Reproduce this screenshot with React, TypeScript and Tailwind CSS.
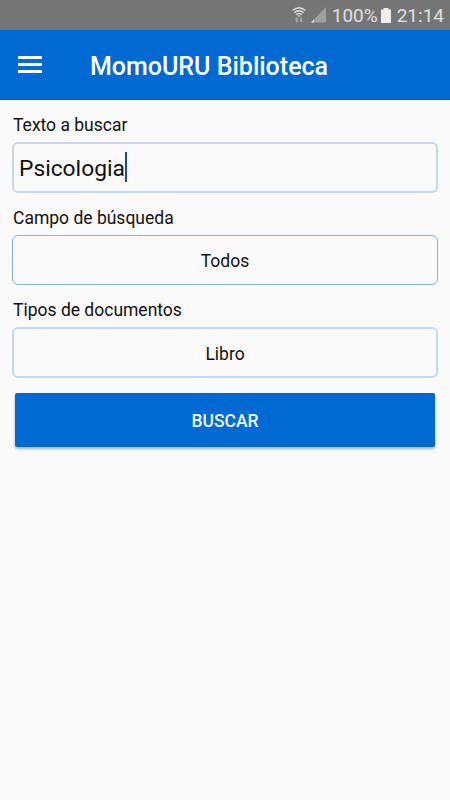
import React from 'react';

const StatusBar: React.FC = () => (
  <div className="flex h-[30px] shrink-0 items-center justify-end bg-[#757575] pr-[6px] text-[19px] leading-none text-[#e0e0e0]">
    <svg width="14" height="16" viewBox="0 0 14 16" fill="none" className="mr-[5px]">
      <path d="M0.6 3.6Q7 -2 13.4 3.6" stroke="#e0e0e0" strokeWidth="1.3" />
      <path d="M2.4 5.8Q7 1.6 11.6 5.8" stroke="#e0e0e0" strokeWidth="1.3" />
      <path d="M4.2 7.8Q7 5.4 9.8 7.8" stroke="#e0e0e0" strokeWidth="1.3" />
      <path d="M5.5 8.4H8.5L7 10Z" fill="#e0e0e0" />
      <path d="M4.8 10.2L7 12.3H5.7V15.4H3.9V12.3H2.6Z" fill="#a6a6a6" />
      <path d="M9.2 15.4L7 13.3H8.3V10.2H10.1V13.3H11.4Z" fill="#a6a6a6" />
    </svg>
    <svg width="15" height="16" viewBox="0 0 15 16" className="mr-[6px]">
      <path d="M15 0V15.5H0Z" fill="#a0a0a0" />
      <path d="M3 12.5V15.5H0Z" fill="#e0e0e0" />
    </svg>
    <span className="mr-[3px]">100%</span>
    <svg width="10" height="15" viewBox="0 0 10 15" className="mr-[6px]">
      <path d="M2.5 0H7.5V1.5H10V15H0V1.5H2.5Z" fill="#eeeeee" />
    </svg>
    <span>21:14</span>
  </div>
);

const Header: React.FC = () => (
  <header className="flex h-[70px] shrink-0 items-center border-b border-[#0055c8] bg-[#0069d2] pl-[18px] text-white">
    <button aria-label="Menú" className="flex w-6 flex-col gap-1">
      <span className="h-[3px] bg-white"></span>
      <span className="h-[3px] bg-white"></span>
      <span className="h-[3px] bg-white"></span>
    </button>
    <h1 className="ml-12 pt-[5px] text-[25px] font-medium leading-[30px]">MomoURU Biblioteca</h1>
  </header>
);

export default function App() {
  return (
    <div className="flex h-[800px] w-[450px] flex-col overflow-hidden bg-[#fafafa] font-['Roboto',sans-serif] text-[#111111]">
      <StatusBar />
      <Header />

      <main className="flex flex-col px-3 pt-[13px] text-[17.5px]">
        <label className="h-[29px] pl-px leading-[25px]">Texto a buscar</label>
        <div className="flex h-[51px] items-center rounded-[6px] border-2 border-[#c0d8f2] pl-[5px]">
          <span className="pt-[3px] text-[22.8px] leading-none">Psicologia</span>
          <span className="mb-px h-[30px] w-[2px] bg-[#1c48a8]"></span>
        </div>

        <label className="mt-[13px] h-[29px] pl-px leading-[25px]">Campo de búsqueda</label>
        <button className="h-[50px] rounded-[6px] border border-[#80b4e8] pt-[2px]">Todos</button>

        <label className="mt-[13px] h-[29px] pl-px leading-[25px]">Tipos de documentos</label>
        <button className="h-[51px] rounded-[6px] border-2 border-[#c0d8f2] pt-[3px]">Libro</button>

        <button className="mx-[3px] mt-[15px] h-[54px] rounded-[2px] bg-[#0069d2] pt-[2px] font-medium text-[#f0f5fc] shadow-[0_2px_3px_rgba(0,0,0,0.3)]">
          BUSCAR
        </button>
      </main>
    </div>
  );
}
